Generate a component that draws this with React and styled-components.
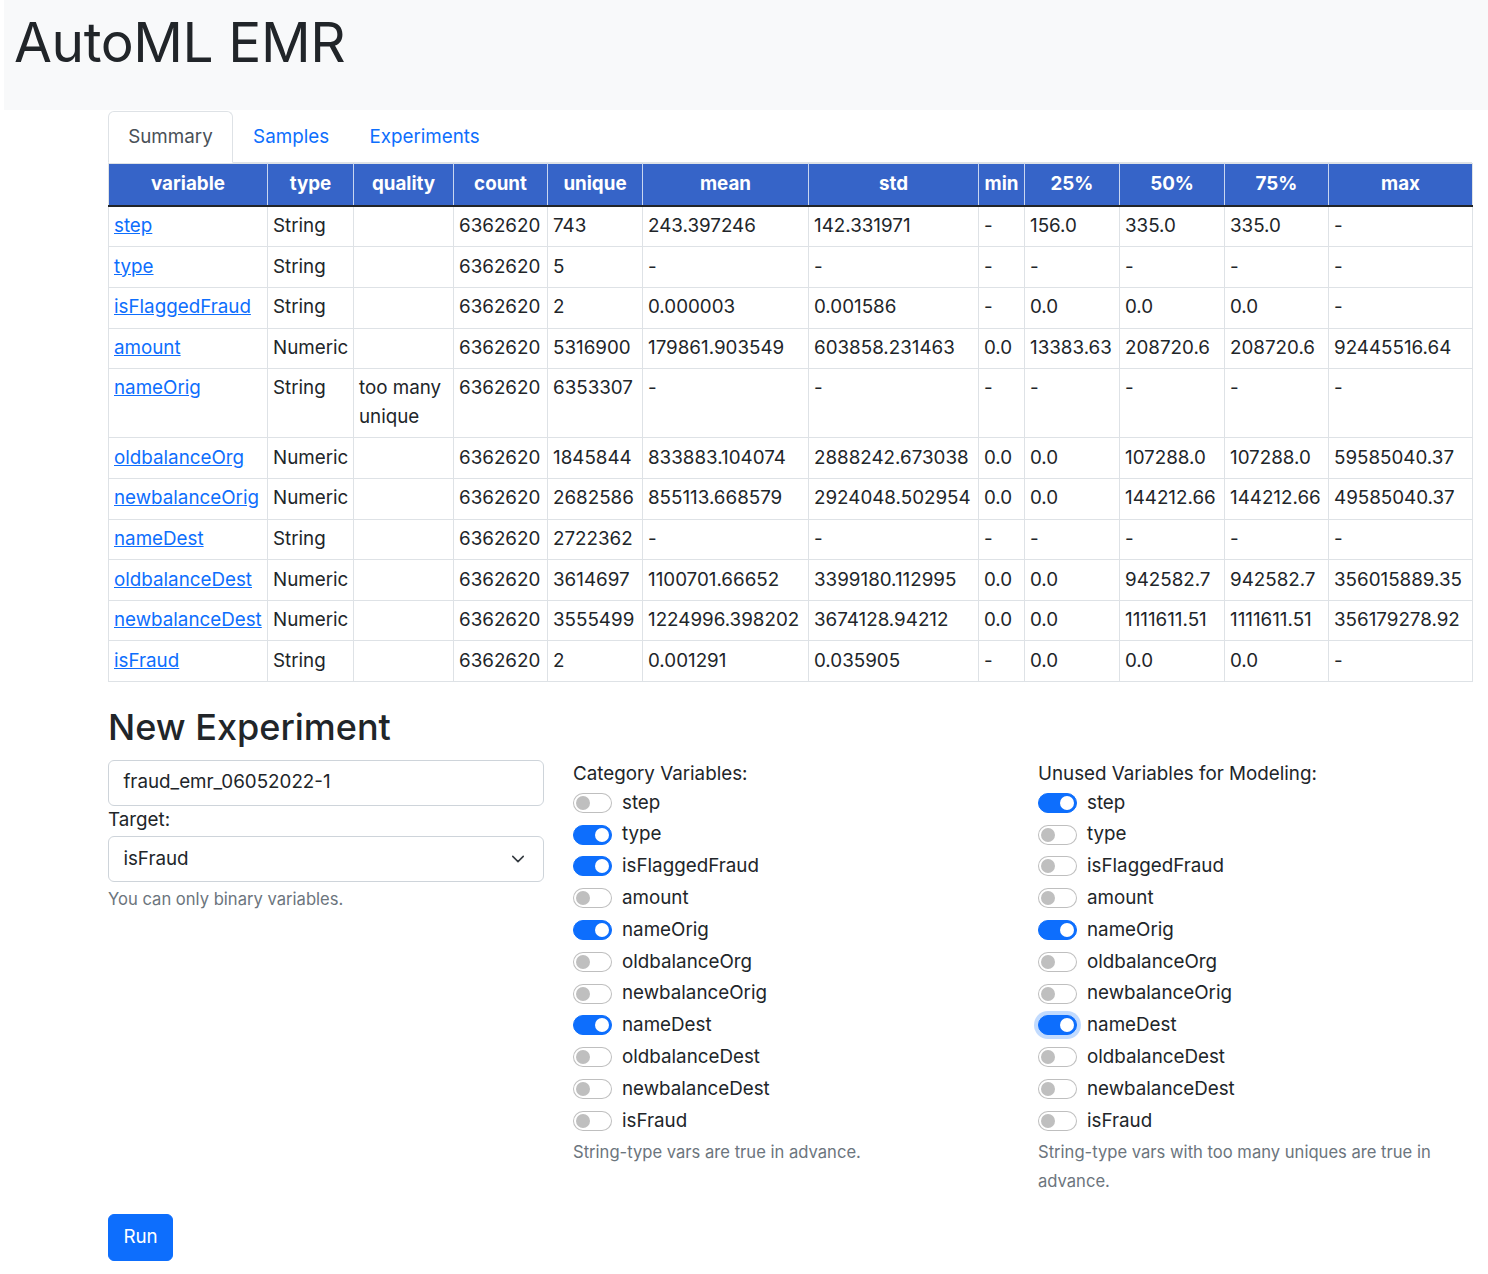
import React from 'react';
import styled, { createGlobalStyle } from 'styled-components';

const GlobalStyle = createGlobalStyle`
  body {
    margin: 0;
    font-family: Inter, "Noto Sans", "Liberation Sans", sans-serif;
    font-size: 18.8px;
    line-height: 1.5;
    color: #212529;
    background: #fff;
  }
  * { box-sizing: border-box; }
`;

const blue = '#0d6efd';
const border = '#dee2e6';

const Header = styled.header`
  height: 110px;
  margin-left: 4px;
  padding: 9px 10px;
  background-color: #f8f9fa;
`;

const Title = styled.h1`
  margin: 0;
  font-size: 55px;
  font-weight: 400;
  line-height: 1.2;
  letter-spacing: -0.4px;
`;

const Main = styled.main`
  width: 1364px;
  margin-left: 108px;
`;

const Tabs = styled.nav`
  display: flex;
  border-bottom: 1px solid ${border};
  margin-top: 1px;
`;

const Tab = styled.a`
  display: block;
  padding: 10.6px 19.2px;
  margin-bottom: -1px;
  border: 1px solid ${(p) => (p.$active ? border : 'transparent')};
  border-bottom-color: ${(p) => (p.$active ? '#fff' : 'transparent')};
  border-radius: 6px 6px 0 0;
  background: ${(p) => (p.$active ? '#fff' : 'transparent')};
  color: ${(p) => (p.$active ? '#495057' : blue)};
  text-decoration: none;
  line-height: 28.8px;
`;

const Table = styled.table`
  width: 1364px;
  table-layout: fixed;
  border-collapse: collapse;
  border: 1px solid ${border};
  margin-bottom: 22px;
`;

const Th = styled.th`
  background-color: #3664c8;
  color: #fff;
  font-weight: 700;
  text-align: center;
  padding: 6px 4px;
  line-height: 28.8px;
  border-left: 1px solid #c9d6f0;
  border-bottom: 2px solid #212529;
  white-space: nowrap;
  &:first-child { border-left: none; }
`;

const Td = styled.td`
  padding: 5.4px 5px;
  line-height: 28.8px;
  border: 1px solid ${border};
  vertical-align: top;
  white-space: ${(p) => (p.$wrap ? 'normal' : 'nowrap')};
  overflow: hidden;
`;

const VarLink = styled.a`
  color: ${blue};
  text-decoration: underline;
`;

const Heading = styled.h2`
  margin: 0 0 9.6px;
  font-size: 36px;
  font-weight: 500;
  line-height: 46px;
`;

const FormRow = styled.div`
  display: grid;
  grid-template-columns: repeat(3, 436px);
  column-gap: 29px;
`;

const Col = styled.div`
  display: flex;
  flex-direction: column;
`;

const Input = styled.div`
  height: 46px;
  padding: 7.2px 18px 7.2px 14.4px;
  border: 1px solid #ced4da;
  border-radius: 6px;
  line-height: 28.8px;
  display: flex;
  align-items: center;
  justify-content: space-between;
`;

const Label = styled.div`
  line-height: 28.8px;
  margin-bottom: ${(p) => p.$mb || 0}px;
`;

const Help = styled.div`
  color: #6c757d;
  font-size: 16.6px;
  line-height: ${(p) => p.$lh || 25.2}px;
  margin-top: ${(p) => p.$mt || 0}px;
`;

const Check = styled.label`
  display: flex;
  align-items: center;
  height: 28.8px;
  margin-bottom: 3px;
  gap: 10px;
`;

const Switch = styled.span`
  position: relative;
  flex: none;
  width: 39px;
  height: 20px;
  border-radius: 10px;
  border: 1px solid ${(p) => (p.$on ? blue : 'rgba(0,0,0,.25)')};
  background: ${(p) => (p.$on ? blue : '#fff')};
  box-shadow: ${(p) => (p.$focus ? '0 0 0 4px rgba(13,110,253,.25)' : 'none')};
  &::after {
    content: '';
    position: absolute;
    top: 2px;
    left: ${(p) => (p.$on ? '21px' : '2px')};
    width: 14px;
    height: 14px;
    border-radius: 50%;
    background: ${(p) => (p.$on ? '#fff' : '#bfbfbf')};
  }
`;

const RunButton = styled.button`
  margin-top: 18px;
  align-self: flex-start;
  padding: 8.5px 14.4px;
  font: inherit;
  line-height: 28.8px;
  color: #fff;
  background: ${blue};
  border: 1px solid ${blue};
  border-radius: 6px;
`;

const cols = [
  ['variable', 159],
  ['type', 86],
  ['quality', 100],
  ['count', 94],
  ['unique', 95],
  ['mean', 166],
  ['std', 170],
  ['min', 46],
  ['25%', 95],
  ['50%', 105],
  ['75%', 104],
  ['max', 144],
];

const rows = [
  ['step', 'String', '', '6362620', '743', '243.397246', '142.331971', '-', '156.0', '335.0', '335.0', '-'],
  ['type', 'String', '', '6362620', '5', '-', '-', '-', '-', '-', '-', '-'],
  ['isFlaggedFraud', 'String', '', '6362620', '2', '0.000003', '0.001586', '-', '0.0', '0.0', '0.0', '-'],
  ['amount', 'Numeric', '', '6362620', '5316900', '179861.903549', '603858.231463', '0.0', '13383.63', '208720.6', '208720.6', '92445516.64'],
  ['nameOrig', 'String', 'too many unique', '6362620', '6353307', '-', '-', '-', '-', '-', '-', '-'],
  ['oldbalanceOrg', 'Numeric', '', '6362620', '1845844', '833883.104074', '2888242.673038', '0.0', '0.0', '107288.0', '107288.0', '59585040.37'],
  ['newbalanceOrig', 'Numeric', '', '6362620', '2682586', '855113.668579', '2924048.502954', '0.0', '0.0', '144212.66', '144212.66', '49585040.37'],
  ['nameDest', 'String', '', '6362620', '2722362', '-', '-', '-', '-', '-', '-', '-'],
  ['oldbalanceDest', 'Numeric', '', '6362620', '3614697', '1100701.66652', '3399180.112995', '0.0', '0.0', '942582.7', '942582.7', '356015889.35'],
  ['newbalanceDest', 'Numeric', '', '6362620', '3555499', '1224996.398202', '3674128.94212', '0.0', '0.0', '1111611.51', '1111611.51', '356179278.92'],
  ['isFraud', 'String', '', '6362620', '2', '0.001291', '0.035905', '-', '0.0', '0.0', '0.0', '-'],
];

const vars = rows.map((r) => r[0]);
const categoryOn = ['type', 'isFlaggedFraud', 'nameOrig', 'nameDest'];
const unusedOn = ['step', 'nameOrig', 'nameDest'];

function SwitchList({ on, focus }) {
  return vars.map((v) => (
    <Check key={v}>
      <Switch $on={on.includes(v)} $focus={focus === v} />
      {v}
    </Check>
  ));
}

function Chevron() {
  return (
    <svg width="14" height="14" viewBox="0 0 16 16" fill="none">
      <path d="M2 5l6 6 6-6" stroke="#343a40" strokeWidth="1.8" strokeLinecap="round" strokeLinejoin="round" />
    </svg>
  );
}

export default function App() {
  return (
    <>
      <GlobalStyle />
      <Header>
        <Title>AutoML EMR</Title>
      </Header>
      <Main>
        <Tabs>
          <Tab $active>Summary</Tab>
          <Tab>Samples</Tab>
          <Tab>Experiments</Tab>
        </Tabs>
        <Table>
          <colgroup>
            {cols.map(([name, w]) => (
              <col key={name} style={{ width: w }} />
            ))}
          </colgroup>
          <thead>
            <tr>
              {cols.map(([name]) => (
                <Th key={name}>{name}</Th>
              ))}
            </tr>
          </thead>
          <tbody>
            {rows.map((r) => (
              <tr key={r[0]}>
                {r.map((cell, i) => (
                  <Td key={i} $wrap={i === 2}>
                    {i === 0 ? <VarLink>{cell}</VarLink> : cell}
                  </Td>
                ))}
              </tr>
            ))}
          </tbody>
        </Table>

        <Heading>New Experiment</Heading>
        <FormRow>
          <Col>
            <Input>fraud_emr_06052022-1</Input>
            <Label $mb={2}>Target:</Label>
            <Input>
              isFraud
              <Chevron />
            </Input>
            <Help $mt={4.8}>You can only binary variables.</Help>
          </Col>
          <Col>
            <Label>Category Variables:</Label>
            <SwitchList on={categoryOn} />
            <Help $lh={28.8}>String-type vars are true in advance.</Help>
          </Col>
          <Col>
            <Label>Unused Variables for Modeling:</Label>
            <SwitchList on={unusedOn} focus="nameDest" />
            <Help $lh={28.8}>String-type vars with too many uniques are true in advance.</Help>
          </Col>
        </FormRow>
        <RunButton>Run</RunButton>
      </Main>
    </>
  );
}
